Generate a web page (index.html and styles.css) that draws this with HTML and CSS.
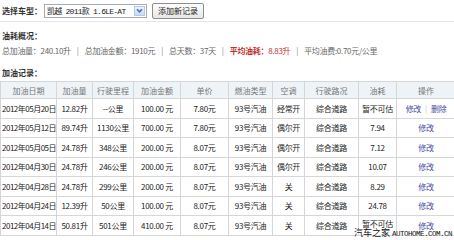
FILE: index.html
```html
<!DOCTYPE html>
<html lang="zh-CN">
<head>
<meta charset="utf-8">
<link rel="stylesheet" href="styles.css">
</head>
<body>
<div class="page">
  <div class="toolbar">
    <span class="label">选择车型：</span>
    <div class="select">
      <span class="select-text">凯越 2011款 1.6LE-AT</span>
      <span class="arrow"><svg width="9" height="9" viewBox="0 0 9 9"><path d="M2 3.2 L4.5 5.8 L7 3.2" fill="none" stroke="#4d6fb5" stroke-width="1.6"/></svg></span>
    </div>
    <button class="btn">添加新记录</button>
  </div>
  <div class="divider"></div>
  <div class="title title-first">油耗概况：</div>
  <div class="stats">
    <span>总加油量：240.10升</span><span class="sep">|</span><span>总加油金额：1910元</span><span class="sep">|</span><span>总天数：37天</span><span class="sep">|</span><span class="red"><b>平均油耗：</b>8.83升</span><span class="sep">|</span><span>平均油费:0.70元/公里</span>
  </div>
  <div class="title title-second">加油记录：</div>
  <table class="records">
    <colgroup>
      <col class="c1"><col class="c2"><col class="c3"><col class="c4"><col class="c5"><col class="c6"><col class="c7"><col class="c8"><col class="c9"><col class="c10">
    </colgroup>
    <thead>
      <tr><th>加油日期</th><th>加油量</th><th>行驶里程</th><th>加油金额</th><th>单价</th><th>燃油类型</th><th>空调</th><th>行驶路况</th><th>油耗</th><th>操作</th></tr>
    </thead>
    <tbody>
      <tr><td>2012年05月20日</td><td>12.82升</td><td>--公里</td><td>100.00 元</td><td>7.80元</td><td>93号汽油</td><td>经常开</td><td>综合道路</td><td>暂不可估</td><td><a>修改</a><span class="bar">|</span><a>删除</a></td></tr>
      <tr><td>2012年05月12日</td><td>89.74升</td><td>1130公里</td><td>700.00 元</td><td>7.80元</td><td>93号汽油</td><td>偶尔开</td><td>综合道路</td><td>7.94</td><td><a>修改</a></td></tr>
      <tr><td>2012年05月05日</td><td>24.78升</td><td>348公里</td><td>200.00 元</td><td>8.07元</td><td>93号汽油</td><td>偶尔开</td><td>综合道路</td><td>7.12</td><td><a>修改</a></td></tr>
      <tr><td>2012年04月30日</td><td>24.78升</td><td>246公里</td><td>200.00 元</td><td>8.07元</td><td>93号汽油</td><td>偶尔开</td><td>综合道路</td><td>10.07</td><td><a>修改</a></td></tr>
      <tr><td>2012年04月28日</td><td>24.78升</td><td>299公里</td><td>200.00 元</td><td>8.07元</td><td>93号汽油</td><td>关</td><td>综合道路</td><td>8.29</td><td><a>修改</a></td></tr>
      <tr><td>2012年04月24日</td><td>12.39升</td><td>50公里</td><td>100.00 元</td><td>8.07元</td><td>93号汽油</td><td>关</td><td>综合道路</td><td>24.78</td><td><a>修改</a></td></tr>
      <tr><td>2012年04月14日</td><td>50.81升</td><td>501公里</td><td>410.00 元</td><td>8.07元</td><td>93号汽油</td><td>关</td><td>综合道路</td><td class="raised">暂不可估</td><td><a>修改</a></td></tr>
    </tbody>
  </table>
  <div class="watermark">汽车之家 <span class="wm-latin">AUTOHOME.COM.CN</span></div>
</div>
</body>
</html>
```
FILE: styles.css
```css
* { box-sizing: border-box; }
html, body { margin: 0; padding: 0; background: #fff; }
body {
  font-family: "Noto Sans CJK SC", "Noto Sans", sans-serif;
  font-size: 8px;
  color: #333;
  width: 454px;
  height: 240px;
  overflow: hidden;
}
.page { position: relative; width: 454px; height: 240px; overflow: hidden; }
.toolbar {
  display: flex;
  align-items: center;
  height: 20px;
  padding: 1px 0 0 2px;
}
.label { font-weight: bold; color: #333; width: 42px; }
.select {
  display: flex;
  align-items: center;
  justify-content: space-between;
  width: 103px;
  height: 14px;
  border: 1px solid #a5acb5;
  padding: 0 1px 0 2px;
  background: #fff;
}
.select-text {
  color: #222;
  font-family: "Liberation Mono", "Noto Sans CJK SC", monospace;
  font-size: 8px;
  letter-spacing: -0.75px;
  white-space: nowrap;
}
.arrow {
  display: flex;
  align-items: center;
  justify-content: center;
  width: 11px;
  height: 10px;
  background: linear-gradient(#eef3fc, #c9d8f3);
  border: 1px solid #b6c6e6;
}
.btn {
  margin-left: 5px;
  height: 16px;
  width: 52px;
  padding: 0;
  font-family: inherit;
  font-size: 8px;
  color: #222;
  background: linear-gradient(#fefefe, #e6e6e6);
  border: 1px solid #8d8d8d;
  border-radius: 2px;
}
.divider { height: 1px; background: #e6e6e6; margin-top: 1px; }
.title { font-weight: bold; color: #333; padding-left: 2px; }
.title-first { margin-top: 6px; height: 16px; line-height: 16px; }
.stats {
  padding-left: 2px;
  color: #666;
  height: 14px;
  line-height: 14px;
  white-space: nowrap;
  letter-spacing: -0.3px;
}
.sep { margin: 0 6px; color: #888; }
.red { color: #c0322f; }
.title-second { margin-top: 8px; height: 14px; line-height: 14px; }
.records {
  margin-top: 1px;
  border-collapse: collapse;
  table-layout: fixed;
  width: 455px;
}
.c1 { width: 56px; } .c2 { width: 36px; } .c3 { width: 41px; } .c4 { width: 47px; }
.c5 { width: 48px; } .c6 { width: 44px; } .c7 { width: 32px; } .c8 { width: 54px; }
.c9 { width: 38px; } .c10 { width: 59px; }
.records th, .records td {
  border: 1px solid #d6d6d6;
  text-align: center;
  padding: 0;
  white-space: nowrap;
  overflow: hidden;
}
.records th {
  background: #eef3f8;
  color: #777;
  font-weight: normal;
  height: 17px;
}
.records td {
  color: #222;
  height: 19.5px;
  letter-spacing: -0.3px;
}
.records td:first-child { text-align: left; padding-left: 1px; letter-spacing: -0.5px; }
.records td.raised { padding-bottom: 4px; }
.records a { color: #4b4ba3; }
.bar { color: #ccc; margin: 0 4px; }
.watermark {
  position: absolute;
  right: 2px;
  bottom: 1px;
  color: #111;
  font-size: 9px;
  line-height: 9px;
  text-shadow: 0 0 1px #fff, 0 0 2px #fff;
  white-space: nowrap;
}
.wm-latin {
  font-family: "Liberation Mono", monospace;
  font-size: 7.5px;
  letter-spacing: -0.5px;
}
```
